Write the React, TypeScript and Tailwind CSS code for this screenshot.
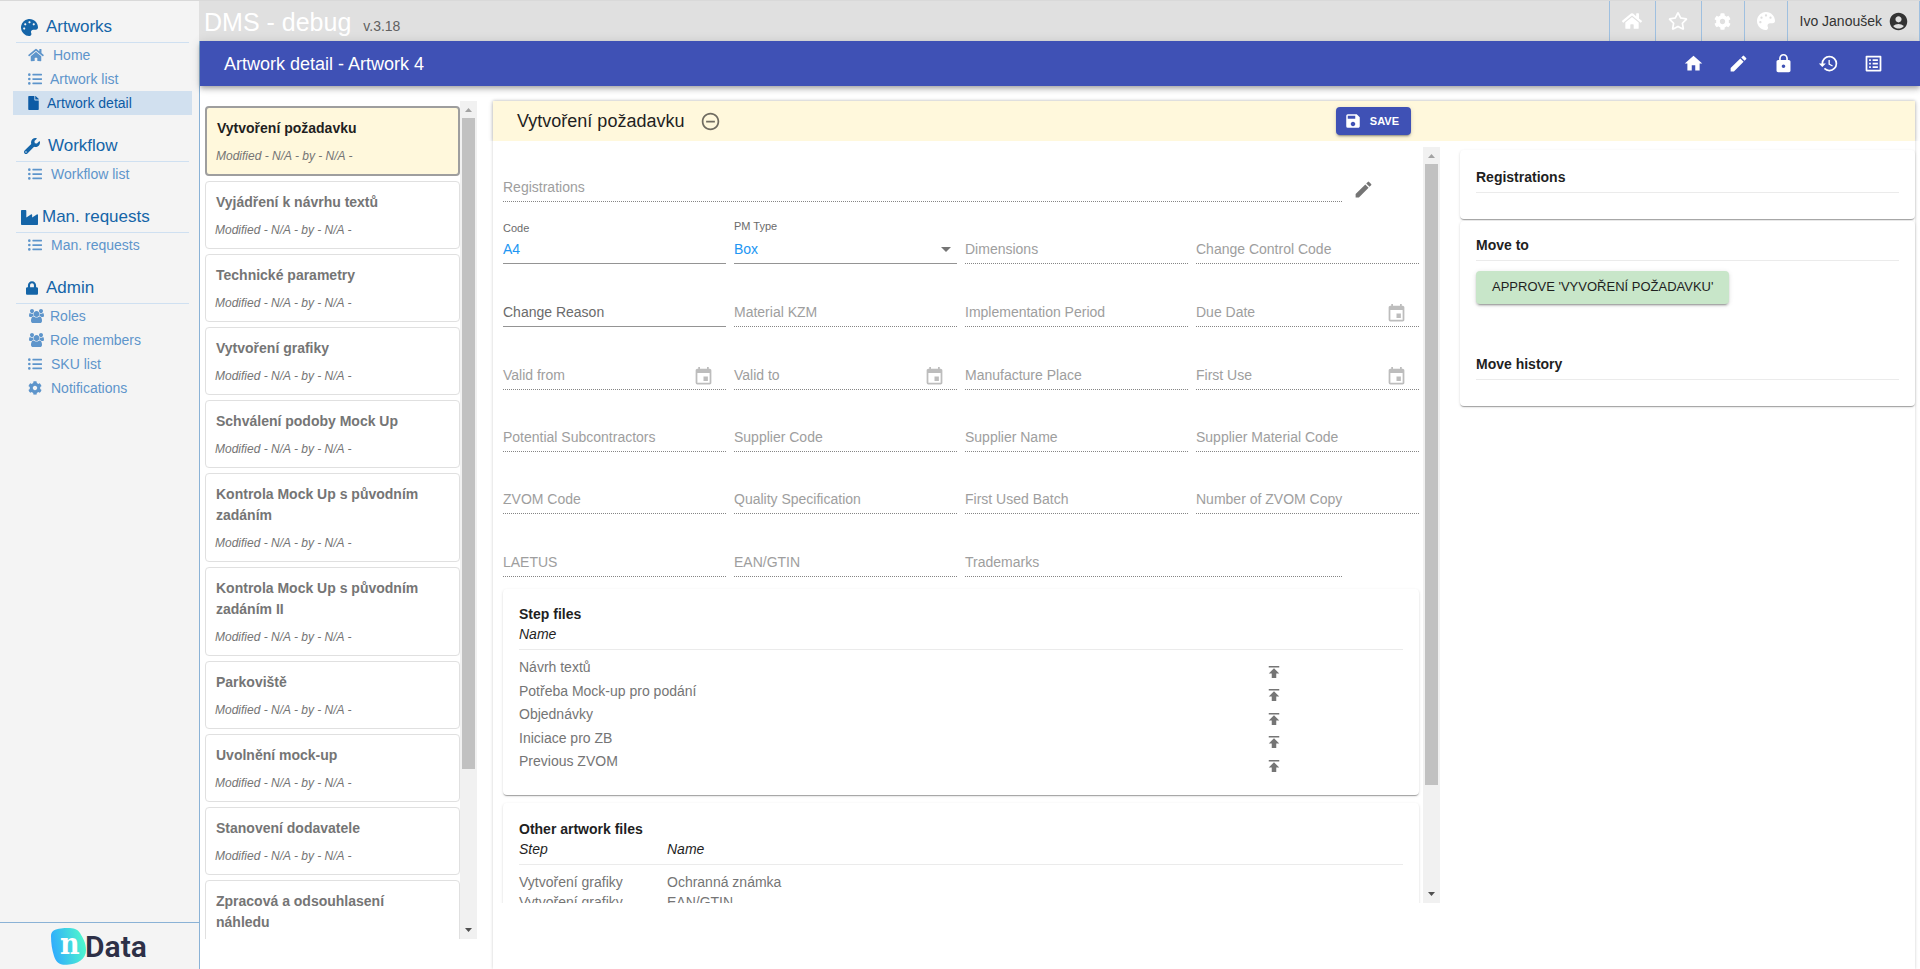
import type { ComponentType, ReactNode } from 'react';
import {
  FaCog,
  FaFile,
  FaHome,
  FaIndustry,
  FaListUl,
  FaLock,
  FaPalette,
  FaRegStar,
  FaWrench,
} from 'react-icons/fa';
import {
  MdAccountCircle,
  MdEdit,
  MdEvent,
  MdHistory,
  MdHome,
  MdListAlt,
  MdLock,
  MdPublish,
  MdRemoveCircleOutline,
  MdSave,
} from 'react-icons/md';

type Icon = ComponentType<{ className?: string }>;

function GroupIcon({ className }: { className?: string }) {
  return (
    <svg viewBox="0 0 1920 1792" className={className} fill="currentColor" aria-hidden="true">
      <path d="M593 896q-162 5-265 128h-134q-82 0-138-40.500t-56-118.500q0-353 124-353 6 0 43.500 21t97.500 42.500 119 21.500q67 0 133-23-5 37-5 66 0 139 81 256zm1071 637q0 120-73 189.500t-194 69.500h-874q-121 0-194-69.500t-73-189.500q0-53 3.500-103.500t14-109 26.500-108.500 43-97.500 62-81 85.500-53.500 111.500-20q10 0 43 21.500t73 48 107 48 135 21.500 135-21.500 107-48 73-48 43-21.500q61 0 111.500 20t85.500 53.500 62 81 43 97.500 26.500 108.500 14 109 3.500 103.500zm-1024-1277q0 106-75 181t-181 75-181-75-75-181 75-181 181-75 181 75 75 181zm704 384q0 159-112.500 271.500t-271.500 112.500-271.500-112.500-112.500-271.500 112.500-271.500 271.500-112.500 271.500 112.500 112.500 271.500zm576 225q0 78-56 118.500t-138 40.500h-134q-103-123-265-128 81-117 81-256 0-29-5-66 66 23 133 23 59 0 119-21.500t97.500-42.500 43.500-21q124 0 124 353zm-128-609q0 106-75 181t-181 75-181-75-75-181 75-181 181-75 181 75 75 181z" />
    </svg>
  );
}

interface NavItem {
  label: string;
  icon: Icon;
  iconClass: string;
  active?: boolean;
}

interface NavSection {
  title: string;
  icon: Icon;
  headClass: string;
  iconClass: string;
  items: NavItem[];
}

const listIcon = 'h-[14px] w-[14px] mr-[9px]';
const groupIcon = 'h-[14px] w-[15px] ml-px mr-1.5';

const sections: NavSection[] = [
  {
    title: 'Artworks',
    icon: FaPalette,
    headClass: 'pl-[5px]',
    iconClass: 'h-[17px] w-[17px] mr-2',
    items: [
      { label: 'Home', icon: FaHome, iconClass: 'h-[14px] w-4 mr-[9px]' },
      { label: 'Artwork list', icon: FaListUl, iconClass: 'h-[14px] w-[14px] mr-2' },
      { label: 'Artwork detail', icon: FaFile, iconClass: 'h-[14px] w-[11px] mr-2', active: true },
    ],
  },
  {
    title: 'Workflow',
    icon: FaWrench,
    headClass: 'pl-2',
    iconClass: 'h-4 w-4 mr-2',
    items: [{ label: 'Workflow list', icon: FaListUl, iconClass: listIcon }],
  },
  {
    title: 'Man. requests',
    icon: FaIndustry,
    headClass: 'pl-[5px]',
    iconClass: 'h-[17px] w-[17px] mr-1',
    items: [{ label: 'Man. requests', icon: FaListUl, iconClass: listIcon }],
  },
  {
    title: 'Admin',
    icon: FaLock,
    headClass: 'pl-[10px]',
    iconClass: 'h-[14px] w-3 mr-2',
    items: [
      { label: 'Roles', icon: GroupIcon, iconClass: groupIcon },
      { label: 'Role members', icon: GroupIcon, iconClass: groupIcon },
      { label: 'SKU list', icon: FaListUl, iconClass: listIcon },
      { label: 'Notifications', icon: FaCog, iconClass: listIcon },
    ],
  },
];

const steps = [
  'Vytvoření požadavku',
  'Vyjádření k návrhu textů',
  'Technické parametry',
  'Vytvoření grafiky',
  'Schválení podoby Mock Up',
  'Kontrola Mock Up s původním zadáním',
  'Kontrola Mock Up s původním zadáním II',
  'Parkoviště',
  'Uvolnění mock-up',
  'Stanovení dodavatele',
  'Zpracová a odsouhlasení náhledu',
];

interface FieldDef {
  label: string;
  date?: boolean;
  enabled?: boolean;
  wide?: boolean;
}

const fields: FieldDef[] = [
  { label: 'Dimensions' },
  { label: 'Change Control Code' },
  { label: 'Change Reason', enabled: true },
  { label: 'Material KZM' },
  { label: 'Implementation Period' },
  { label: 'Due Date', date: true },
  { label: 'Valid from', date: true },
  { label: 'Valid to', date: true },
  { label: 'Manufacture Place' },
  { label: 'First Use', date: true },
  { label: 'Potential Subcontractors' },
  { label: 'Supplier Code' },
  { label: 'Supplier Name' },
  { label: 'Supplier Material Code' },
  { label: 'ZVOM Code' },
  { label: 'Quality Specification' },
  { label: 'First Used Batch' },
  { label: 'Number of ZVOM Copy' },
  { label: 'LAETUS' },
  { label: 'EAN/GTIN' },
  { label: 'Trademarks', wide: true },
];

const stepFiles = ['Návrh textů', 'Potřeba Mock-up pro podání', 'Objednávky', 'Iniciace pro ZB', 'Previous ZVOM'];

const otherFiles = [
  ['Vytvoření grafiky', 'Ochranná známka'],
  ['Vytvoření grafiky', 'EAN/GTIN'],
];

const cardShadow =
  'rounded bg-white shadow-[0_2px_1px_-1px_rgba(0,0,0,0.2),0_1px_1px_0_rgba(0,0,0,0.14),0_1px_3px_0_rgba(0,0,0,0.12)]';

function Logo() {
  return (
    <svg viewBox="0 0 100 40" className="h-10 w-[100px]" role="img" aria-label="nData">
      <defs>
        <linearGradient id="blob" x1="0" x2="1" y1="0.6" y2="0.4">
          <stop offset="0" stopColor="#2fa9ff" />
          <stop offset="1" stopColor="#4ff9cb" />
        </linearGradient>
      </defs>
      <path
        d="M1 9C1 4 5 2 11 1.500C20 .5 27 1 30 6C33 11 36 16 36 23C36 32 28 37 17 37.800C9 38.300 6 35 4 29C2 23 1 16 1 9Z"
        fill="url(#blob)"
      />
      <text x="10" y="27" fontFamily="'DejaVu Serif Condensed','DejaVu Serif',serif" fontWeight="700" fontSize="30" fill="#fff">
        n
      </text>
      <text x="35" y="30" fontFamily="Roboto,sans-serif" fontWeight="600" fontSize="30" fill="#2d3047">
        Data
      </text>
    </svg>
  );
}

function Sidebar() {
  return (
    <aside className="flex w-[200px] shrink-0 flex-col border-r border-[#8ab2d6] bg-[#f4f4f4]">
      <nav className="flex-1 pt-[11px]">
        {sections.map((section) => (
          <section key={section.title} className="pb-4">
            <h2
              className={`mr-[10px] ml-4 flex h-[31px] items-center border-b border-[#cfe0f1] text-[17px] text-[#1565a8] ${section.headClass}`}
            >
              <section.icon className={section.iconClass} />
              {section.title}
            </h2>
            <ul>
              {section.items.map((item) => (
                <li key={item.label}>
                  <a
                    href="#"
                    className={`mr-[7px] ml-[13px] flex h-6 items-center pl-[15px] text-sm ${
                      item.active ? 'bg-[#d1e0ef] text-[#0d5ba5]' : 'text-[#5e95cb]'
                    }`}
                  >
                    <item.icon className={item.iconClass} />
                    {item.label}
                  </a>
                </li>
              ))}
            </ul>
          </section>
        ))}
      </nav>
      <div className="flex h-[47px] justify-center border-t border-[#8ab2d6] pt-1">
        <Logo />
      </div>
    </aside>
  );
}

function TopBar() {
  const cell = 'flex items-center justify-center border-l border-[#9fc0e0]';
  return (
    <header className="-ml-px flex h-10 shrink-0 justify-between bg-[#e0e0e0]">
      <div className="flex items-baseline gap-3 pt-[3px] pl-[5px]">
        <h1 className="text-[25px] leading-9 text-white">DMS - debug</h1>
        <span className="text-sm text-[#616161]">v.3.18</span>
      </div>
      <div className="flex border-r border-[#9fc0e0] text-white">
        <button type="button" aria-label="Home" className={`w-[46px] ${cell}`}>
          <FaHome className="h-[18px] w-5" />
        </button>
        <button type="button" aria-label="Favourites" className={`w-[46px] ${cell}`}>
          <FaRegStar className="h-[18px] w-5" />
        </button>
        <button type="button" aria-label="Settings" className={`w-[43px] ${cell}`}>
          <FaCog className="h-[17px] w-[17px]" />
        </button>
        <button type="button" aria-label="Theme" className={`w-[43px] ${cell}`}>
          <FaPalette className="h-[18px] w-[18px]" />
        </button>
        <button type="button" className={`gap-1.5 pr-[10px] pl-3 text-sm text-[#333333] ${cell}`}>
          Ivo Janoušek
          <MdAccountCircle className="h-[21px] w-[21px]" />
        </button>
      </div>
    </header>
  );
}

const tools: { label: string; icon: Icon }[] = [
  { label: 'Home', icon: MdHome },
  { label: 'Edit', icon: MdEdit },
  { label: 'Lock', icon: MdLock },
  { label: 'History', icon: MdHistory },
  { label: 'Details', icon: MdListAlt },
];

function Toolbar() {
  return (
    <div className="z-10 flex h-[45px] shrink-0 items-center justify-between bg-[#3f51b5] pr-9 pl-6 text-white shadow-[0_2px_4px_-1px_rgba(0,0,0,0.2),0_4px_5px_0_rgba(0,0,0,0.14),0_1px_10px_0_rgba(0,0,0,0.12)]">
      <h2 className="text-lg">Artwork detail - Artwork 4</h2>
      <div className="flex gap-6">
        {tools.map((t) => (
          <button key={t.label} type="button" aria-label={t.label}>
            <t.icon className="h-[21px] w-[21px]" />
          </button>
        ))}
      </div>
    </div>
  );
}

function ScrollTrack({ thumb }: { thumb: string }) {
  return (
    <div aria-hidden="true" className="flex w-[17px] shrink-0 flex-col bg-[#f1f1f1]">
      <svg viewBox="0 0 17 17" className="h-[17px] w-[17px]">
        <path d="M5 11h7L8.500 7z" fill="#a3a3a3" />
      </svg>
      <div className="flex-1 px-0.5">
        <div className={`bg-[#c1c1c1] ${thumb}`} />
      </div>
      <svg viewBox="0 0 17 17" className="h-[17px] w-[17px]">
        <path d="M5 6h7L8.500 10z" fill="#505050" />
      </svg>
    </div>
  );
}

function StepList() {
  return (
    <div className="mt-[15px] mb-[30px] flex w-[277px] shrink-0 overflow-hidden">
      <ul className="flex flex-1 flex-col gap-[5px] pt-[5px] pl-[5px]">
        {steps.map((name, i) => (
          <li
            key={name}
            className={`shrink-0 rounded pt-[10px] pb-2 ${
              i === 0
                ? 'border-2 border-[#9e9e9e] bg-[#fff8dc] text-[#1f1f1f]'
                : 'border border-[#e0e0e0] bg-white text-[#757575]'
            }`}
          >
            <h3 className="pr-7 pl-[10px] text-sm leading-[21px] font-bold">{name}</h3>
            <p className="mt-[7px] pl-[9px] text-xs leading-5 text-[#757575] italic">Modified - N/A - by - N/A -</p>
          </li>
        ))}
      </ul>
      <ScrollTrack thumb="h-[81%]" />
    </div>
  );
}

function Field({ label, date, enabled, wide }: FieldDef) {
  const id = label.toLowerCase().replace(/\W+/g, '-');
  return (
    <div className={`flex flex-col justify-end ${wide ? 'col-span-2 pr-[77px]' : ''}`}>
      <div
        className={`flex items-center border-b ${
          enabled ? 'border-[#949494] text-[#6b6b6b]' : 'border-dotted border-[#858585] text-[#9e9e9e]'
        }`}
      >
        <div className="grid flex-1">
          <label htmlFor={id} className="text-sm leading-7 [grid-area:1/1]">
            {label}
          </label>
          <input id={id} disabled={!enabled} className="h-7 w-full min-w-0 bg-transparent text-sm outline-none [grid-area:1/1]" />
        </div>
        {date && (
          <button type="button" disabled aria-label={`Pick ${label}`} className="mr-3 pt-0.5 text-[#bdbdbd]">
            <MdEvent className="h-[21px] w-[21px]" />
          </button>
        )}
      </div>
    </div>
  );
}

function ArtworkForm() {
  return (
    <form>
      <div className="flex h-[55px] items-end">
        <div className="grid flex-1 border-b border-dotted border-[#858585] text-[#9e9e9e]">
          <label htmlFor="registrations" className="text-sm leading-7 [grid-area:1/1]">
            Registrations
          </label>
          <input id="registrations" disabled className="h-7 w-full bg-transparent text-sm [grid-area:1/1]" />
        </div>
        <div className="flex w-[77px] pb-0.5 pl-[11px]">
          <button type="button" aria-label="Edit registrations" className="text-[#757575]">
            <MdEdit className="h-[21px] w-[21px]" />
          </button>
        </div>
      </div>
      <div className="grid grid-cols-4 grid-rows-[62px_63px_63px_62px_62px_63px] gap-x-2">
        <div className="flex flex-col justify-end border-b border-[#949494]">
          <label htmlFor="code" className="text-[11px] leading-[14px] text-[#6b6b6b]">
            Code
          </label>
          <input id="code" defaultValue="A4" className="h-7 w-full bg-transparent text-sm text-[#2196f3] outline-none" />
        </div>
        <div className="flex flex-col justify-end border-b border-[#949494]">
          <label htmlFor="pm-type" className="text-[11px] leading-[17px] text-[#6b6b6b]">
            PM Type
          </label>
          <div className="flex items-center pr-1.5">
            <select id="pm-type" className="h-7 flex-1 appearance-none bg-transparent text-sm text-[#2196f3] outline-none">
              <option>Box</option>
            </select>
            <svg viewBox="0 0 10 5" className="h-[5px] w-[10px]" aria-hidden="true">
              <path d="M0 0h10L5 5z" fill="#757575" />
            </svg>
          </div>
        </div>
        {fields.map((f) => (
          <Field key={f.label} {...f} />
        ))}
      </div>
    </form>
  );
}

function StepFiles() {
  return (
    <section className={`mt-3 px-4 pt-[15px] pb-5 ${cardShadow}`}>
      <h3 className="text-sm font-bold text-[#1f1f1f]">Step files</h3>
      <table className="w-full text-left text-sm">
        <thead>
          <tr className="border-b border-[#ebebeb]">
            <th colSpan={2} className="pb-[5px] leading-5 font-normal text-[#1f1f1f] italic">
              Name
            </th>
          </tr>
        </thead>
        <tbody className="text-[#757575] before:block before:h-[7px] before:content-['']">
          {stepFiles.map((name) => (
            <tr key={name} className="odd:h-6 even:h-[23px]">
              <td className="p-0 align-top leading-5">{name}</td>
              <td className="w-[138px] p-0 align-bottom">
                <button type="button" aria-label={`Upload ${name}`} className="block">
                  <MdPublish className="h-[18px] w-[18px]" />
                </button>
              </td>
            </tr>
          ))}
        </tbody>
      </table>
    </section>
  );
}

function OtherFiles() {
  return (
    <section className={`mt-2 p-4 ${cardShadow}`}>
      <h3 className="text-sm font-bold text-[#1f1f1f]">Other artwork files</h3>
      <table className="w-full text-left text-sm">
        <thead>
          <tr className="border-b border-[#ebebeb] text-[#1f1f1f] italic">
            <th className="w-[148px] pb-[5px] leading-5 font-normal">Step</th>
            <th className="pb-[5px] leading-5 font-normal">Name</th>
          </tr>
        </thead>
        <tbody className="text-[#757575] before:block before:h-[7px] before:content-['']">
          {otherFiles.map(([step, name]) => (
            <tr key={name}>
              <td className="p-0 leading-5">{step}</td>
              <td className="p-0 leading-5">{name}</td>
            </tr>
          ))}
        </tbody>
      </table>
    </section>
  );
}

function SideHeading({ children }: { children: ReactNode }) {
  return <h3 className="border-b border-[#ebebeb] pb-[5px] text-sm font-bold text-[#1f1f1f]">{children}</h3>;
}

function SidePanel() {
  return (
    <div className="flex flex-col gap-0.5 pt-[9px]">
      <section className={`px-4 pt-[17px] pb-[26px] ${cardShadow}`}>
        <SideHeading>Registrations</SideHeading>
      </section>
      <section className={`px-4 pt-[14px] pb-[26px] ${cardShadow}`}>
        <SideHeading>Move to</SideHeading>
        <button
          type="button"
          className="mt-[10px] mb-[50px] block h-[33px] rounded bg-[#c8e6c9] px-4 pb-0.5 text-[13px] text-[#1f1f1f] shadow-[0_3px_1px_-2px_rgba(0,0,0,0.2),0_2px_2px_0_rgba(0,0,0,0.14),0_1px_5px_0_rgba(0,0,0,0.12)]"
        >
          APPROVE 'VYVOŘENÍ POŽADAVKU'
        </button>
        <SideHeading>Move history</SideHeading>
      </section>
    </div>
  );
}

function Detail() {
  return (
    <main className="mt-[15px] mr-[5px] ml-4 flex min-w-0 flex-1 flex-col bg-white shadow-[0_0_3px_0_rgba(0,0,0,0.2)]">
      <div className="grid h-10 shrink-0 grid-cols-[minmax(0,1fr)_455px] gap-5 bg-[#fff8dc] shadow-[0_1px_5px_0_rgba(0,0,0,0.2)] [clip-path:inset(-6px_-6px_0_-6px)]">
        <div className="flex items-center justify-between pr-[29px] pl-6">
          <div className="flex items-center gap-4">
            <h2 className="text-lg text-[#1f1f1f]">Vytvoření požadavku</h2>
            <button type="button" aria-label="Collapse" className="text-[#706c61]">
              <MdRemoveCircleOutline className="h-[21px] w-[21px]" />
            </button>
          </div>
          <button
            type="button"
            className="flex h-7 items-center gap-2 rounded bg-[#3f51b5] pr-3 pl-2 text-[11px] font-bold text-white shadow-[0_3px_1px_-2px_rgba(0,0,0,0.2),0_2px_2px_0_rgba(0,0,0,0.14),0_1px_5px_0_rgba(0,0,0,0.12)]"
          >
            <MdSave className="h-[18px] w-[18px]" />
            SAVE
          </button>
        </div>
      </div>
      <div className="grid min-h-0 flex-1 grid-cols-[minmax(0,1fr)_455px] gap-5">
        <div className="mt-1.5 mb-[66px] flex min-h-0 overflow-hidden">
          <div className="min-w-0 flex-1 pr-1 pl-[10px]">
            <ArtworkForm />
            <StepFiles />
            <OtherFiles />
          </div>
          <ScrollTrack thumb="h-[86%]" />
        </div>
        <SidePanel />
      </div>
    </main>
  );
}

export default function App() {
  return (
    <div className="flex h-screen overflow-hidden border-t border-[#d9d9d9] bg-white font-['Liberation_Sans',Arial,sans-serif]">
      <Sidebar />
      <div className="flex min-w-0 flex-1 flex-col">
        <TopBar />
        <Toolbar />
        <div className="flex min-h-0 flex-1">
          <StepList />
          <Detail />
        </div>
      </div>
    </div>
  );
}
